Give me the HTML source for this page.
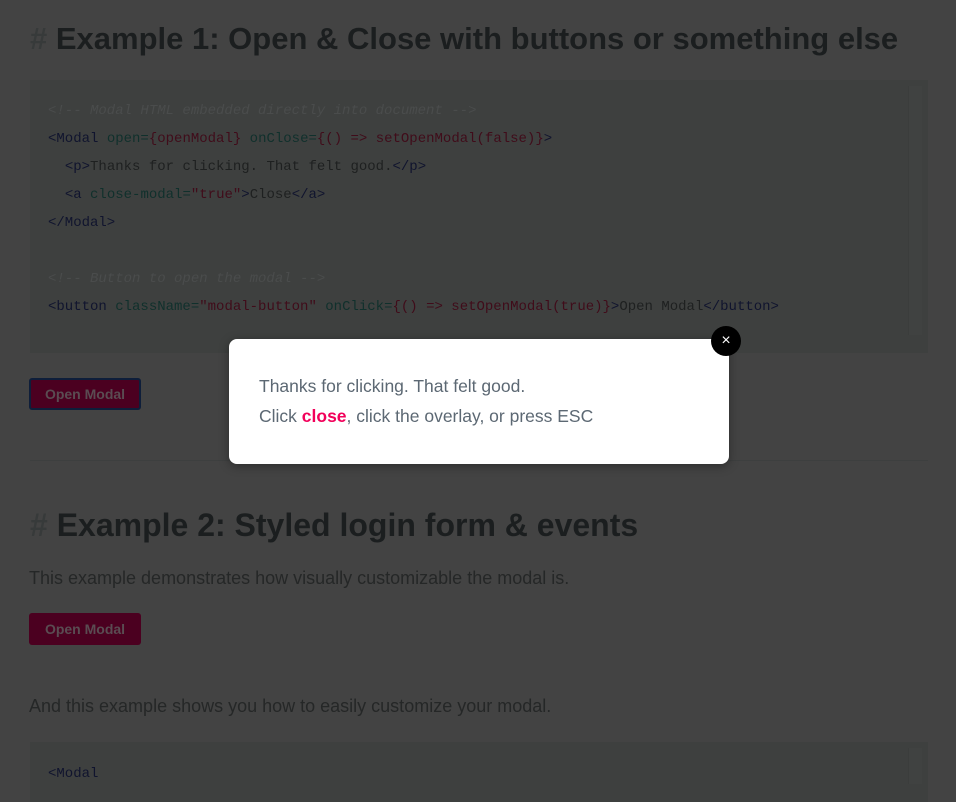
<!DOCTYPE html>
<html><head><meta charset="utf-8"><style>
html,body{margin:0;padding:0;width:956px;height:786px;overflow:hidden;background:#434343;font-family:"Liberation Sans",sans-serif}
.abs{position:absolute}
h1{position:absolute;left:30px;margin:0;font-size:31px;font-weight:bold;color:#1b1e1f;white-space:nowrap}
h1 span{color:#373a3a}
.code{position:absolute;left:30px;width:898px;background:#3e403f}
.code .sb{position:absolute;right:6px;top:6px;width:13px;bottom:18px;background:#404241;border-left:1px solid #3b3d3c}
pre{margin:0;position:absolute;left:18px;font-family:"Liberation Mono","DejaVu Sans Mono",monospace;font-size:14px;line-height:28px;color:#1e2020}
.c{color:#4a4c4c;font-style:italic}.t{color:#10142e}.a{color:#10302c}.s{color:#400c1a}
.btn{position:absolute;left:29px;width:112px;height:32px;background:#4b0020;border-radius:3px;color:#5a4c52;font-weight:bold;font-size:14px;text-align:center;line-height:32px;box-sizing:border-box}
p.txt{position:absolute;left:29px;margin:0;font-size:18px;color:#252727;white-space:nowrap}
</style></head><body>
<h1 style="top:21px"><span>#</span> Example 1: Open &amp; Close with buttons or something else</h1>
<div class="code" style="top:80px;height:273px">
<div class="sb"></div>
<pre style="top:17px"><span class="c">&lt;!-- Modal HTML embedded directly into document --&gt;</span>
<span class="t">&lt;Modal</span> <span class="a">open=</span><span class="s">{openModal}</span> <span class="a">onClose=</span><span class="s">{() =&gt; setOpenModal(false)}</span><span class="t">&gt;</span>
  <span class="t">&lt;p&gt;</span>Thanks for clicking. That felt good.<span class="t">&lt;/p&gt;</span>
  <span class="t">&lt;a</span> <span class="a">close-modal=</span><span class="s">"true"</span><span class="t">&gt;</span>Close<span class="t">&lt;/a&gt;</span>
<span class="t">&lt;/Modal&gt;</span>

<span class="c">&lt;!-- Button to open the modal --&gt;</span>
<span class="t">&lt;button</span> <span class="a">className=</span><span class="s">"modal-button"</span> <span class="a">onClick=</span><span class="s">{() =&gt; setOpenModal(true)}</span><span class="t">&gt;</span>Open Modal<span class="t">&lt;/button&gt;</span></pre>
</div>
<div class="btn" style="top:378px;border:2px solid #0e1e3a;line-height:28px">Open Modal</div>
<div class="abs" style="left:30px;top:460px;width:898px;height:1px;background:#3d3f3f"></div>
<h1 style="top:507px;font-size:32px"><span>#</span> Example 2: Styled login form &amp; events</h1>
<p class="txt" style="top:568px">This example demonstrates how visually customizable the modal is.</p>
<div class="btn" style="top:613px">Open Modal</div>
<p class="txt" style="top:696px">And this example shows you how to easily customize your modal.</p>
<div class="code" style="top:742px;height:60px"><div class="sb"></div>
<pre style="top:18px"><span class="t">&lt;Modal</span></pre></div>

<div class="abs" style="left:229px;top:339px;width:500px;height:125px;background:#fff;border-radius:8px;box-shadow:0 2px 10px rgba(0,0,0,0.35)">
<div class="abs" style="left:30px;top:32px;font-size:17.5px;line-height:30px;color:#5c6873;white-space:nowrap">Thanks for clicking. That felt good.<br>Click <b style="color:#f2005a">close</b>, click the overlay, or press ESC</div>
</div>
<div class="abs" style="left:711px;top:326px;width:30px;height:30px;border-radius:50%;background:#000;color:#fff;text-align:center;line-height:29px;font-size:16px">×</div>
</body></html>
